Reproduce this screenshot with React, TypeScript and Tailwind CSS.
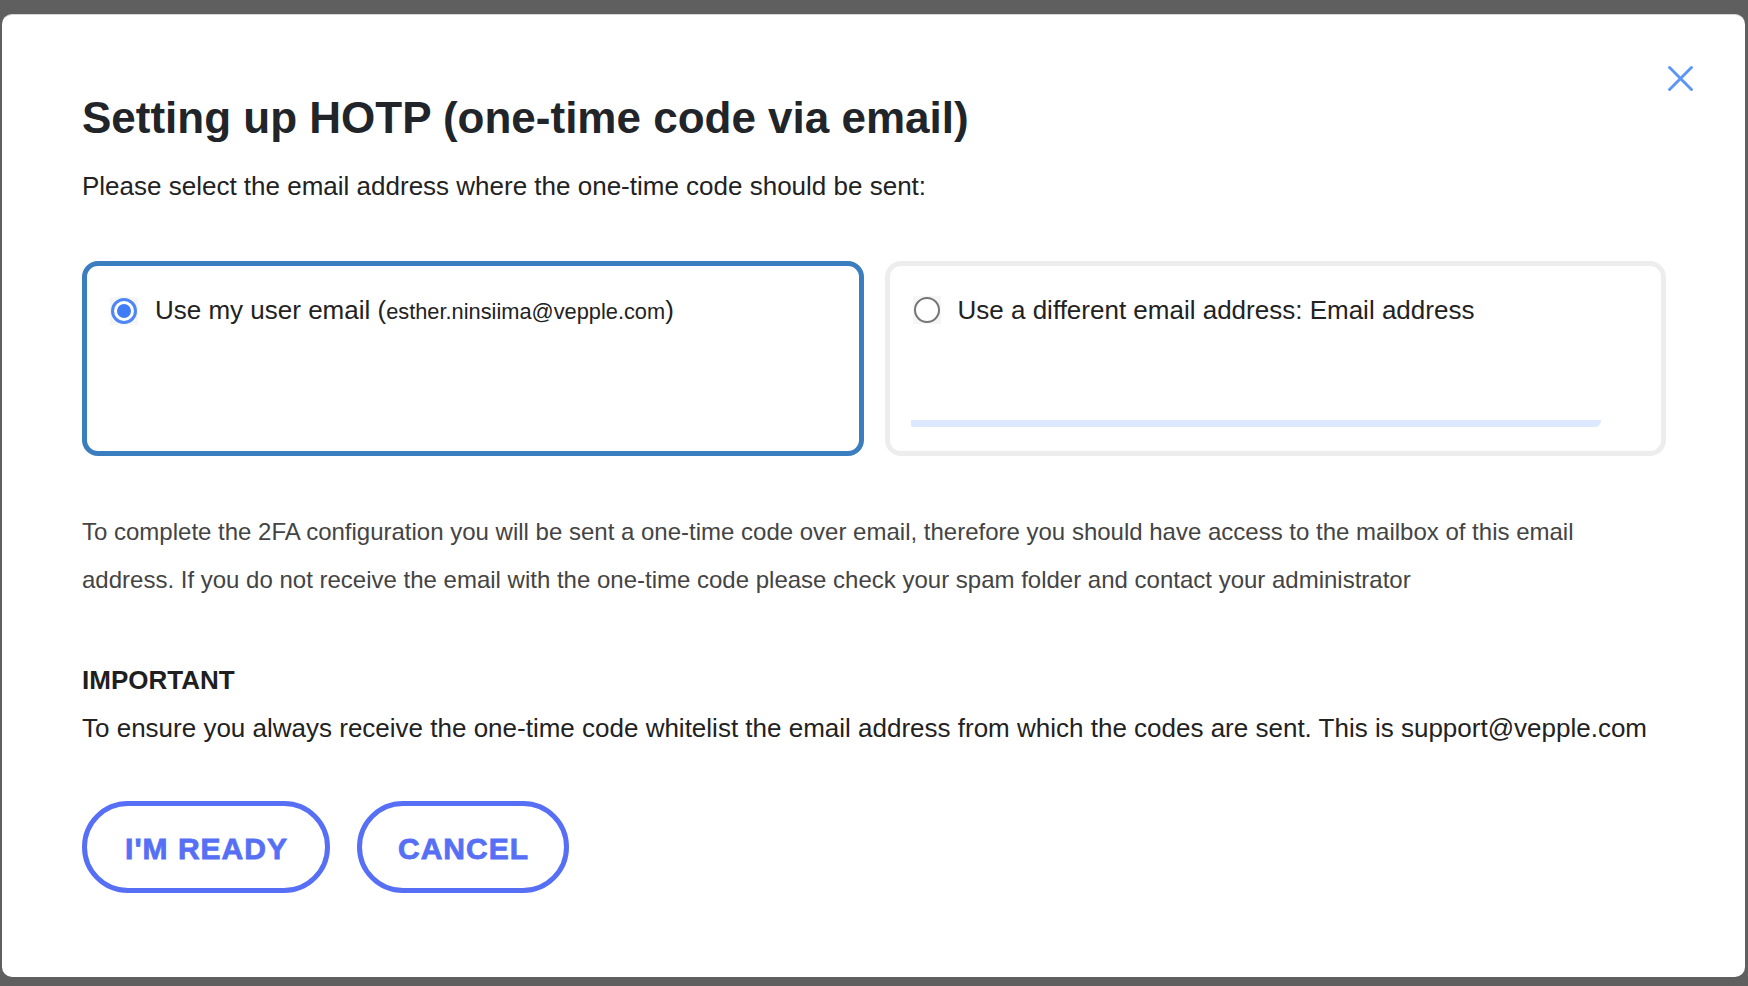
import React from 'react';

const RadioOn: React.FC = () => (
  <span className="flex h-[28px] w-[28px] shrink-0 items-center justify-center bg-[#f6f6f6]">
    <span className="flex h-[26px] w-[26px] items-center justify-center rounded-full border-[3px] border-[#4f86f7] bg-white">
      <span className="h-[14px] w-[14px] rounded-full bg-[#3f7cf7]" />
    </span>
  </span>
);

const RadioOff: React.FC = () => (
  <span className="flex h-[28px] w-[28px] shrink-0 items-center justify-center bg-[#f6f6f6]">
    <span className="h-[26px] w-[26px] rounded-full border-2 border-[#767676] bg-white" />
  </span>
);

const App: React.FC = () => {
  return (
    <div className="h-[986px] w-[1748px] bg-[#5f5f5f] pt-[14px] font-['Liberation_Sans',Arial,sans-serif]">
      <div className="relative ml-[2px] h-[963px] w-[1743px] rounded-[10px] border-t border-[#d6d6d6] bg-white pl-[80px] pr-[79px] pt-[77px]">
        {/* close */}
        <button className="absolute right-[52px] top-[51px] text-[#5b95f8]" aria-label="Close">
          <svg width="25" height="25" viewBox="0 0 24 24" fill="none" stroke="currentColor" strokeWidth="2.8" strokeLinecap="round">
            <path d="M1.5 1.5 22.5 22.5M22.5 1.5 1.5 22.5" />
          </svg>
        </button>

        <h1 className="text-[44px] font-bold leading-[52px] text-[#212529]">
          Setting up HOTP (one-time code via email)
        </h1>
        <p className="mt-[26px] text-[26px] leading-[32px] text-[#222]">
          Please select the email address where the one-time code should be sent:
        </p>

        <div className="mt-[59px] grid grid-cols-2 gap-[21px]">
          <div className="h-[195px] rounded-[16px] border-[5px] border-[#3a7ebf] pl-[23px] pt-[28px]">
            <label className="flex items-center gap-[17px]">
              <RadioOn />
              <span className="text-[26px] leading-[32px] text-[#222]">
                Use my user email (<span className="text-[21.8px]">esther.ninsiima@vepple.com</span>)
              </span>
            </label>
          </div>
          <div className="flex h-[195px] flex-col rounded-[16px] border-[5px] border-[#ededed] pl-[23px] pt-[28px]">
            <label className="flex items-center gap-[17px]">
              <RadioOff />
              <span className="text-[26px] leading-[32px] text-[#222]">
                Use a different email address: Email address
              </span>
            </label>
            <div className="-ml-[2px] mt-[94px] h-[7px] w-[690px] rounded-br-[6px] rounded-bl-[2px] bg-[#dbe8fd]" />
          </div>
        </div>

        <p className="mt-[52px] text-[24px] leading-[48px] text-[#444]">
          To complete the 2FA configuration you will be sent a one-time code over email, therefore you should have access to the mailbox of this email address. If you do not receive the email with the one-time code please check your spam folder and contact your administrator
        </p>

        <h3 className="mt-[60px] text-[26px] font-bold leading-[32px] text-[#1f1f1f]">IMPORTANT</h3>
        <p className="mt-[16px] text-[26px] leading-[32px] text-[#222]">
          To ensure you always receive the one-time code whitelist the email address from which the codes are sent. This is support@vepple.com
        </p>

        <div className="mt-[57px] flex gap-[27px]">
          <button className="flex h-[92px] w-[248px] items-center justify-center rounded-full border-[5px] border-[#566ff5] pl-[1px] pt-[3px] text-[30px] font-bold tracking-[1px] text-[#566ff5] [-webkit-text-stroke:0.8px_#566ff5]">
            I&apos;M READY
          </button>
          <button className="flex h-[92px] w-[212px] items-center justify-center rounded-full border-[5px] border-[#566ff5] pl-[1px] pt-[3px] text-[30px] font-bold tracking-[1px] text-[#566ff5] [-webkit-text-stroke:0.8px_#566ff5]">
            CANCEL
          </button>
        </div>
      </div>
    </div>
  );
};

export default App;
